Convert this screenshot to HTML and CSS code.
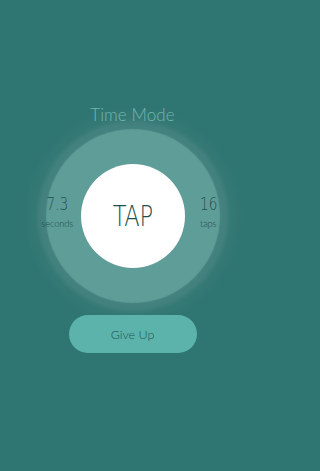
FILE: index.html
```html
<!DOCTYPE html>
<html>
<head>
<meta charset="utf-8">
<link rel="stylesheet" href="styles.css">
</head>
<body>
<main class="screen">
  <h1 class="title">Time Mode</h1>
  <section class="stage">
    <div class="stat stat-left">
      <div class="stat-value">7.3</div>
      <div class="stat-label">seconds</div>
    </div>
    <div class="tap">
      <span class="tap-text">TAP</span>
    </div>
    <div class="stat stat-right">
      <div class="stat-value">16</div>
      <div class="stat-label">taps</div>
    </div>
  </section>
  <button class="give-up">Give Up</button>
</main>
</body>
</html>
```
FILE: styles.css
```css
html, body {
  margin: 0;
  padding: 0;
}
body {
  background: #2f7571;
  font-family: "Lato", "DejaVu Sans", sans-serif;
  width: 265px;
  height: 471px;
  overflow: hidden;
}
.screen {
  display: flex;
  flex-direction: column;
  align-items: center;
  padding-top: 104px;
}
.title {
  margin: 0;
  font-weight: 300;
  font-size: 17px;
  line-height: 22px;
  color: #6db6ae;
  letter-spacing: 0.1px;
}
.stage {
  margin-top: 38px;
  width: 265px;
  display: grid;
  grid-template-columns: 1fr 104px 1fr;
  align-items: center;
}
.tap {
  width: 104px;
  height: 104px;
  border-radius: 50%;
  background: #ffffff;
  display: flex;
  align-items: center;
  justify-content: center;
  box-shadow:
    0 0 1px 35px #5f9d98,
    0 0 4px 43px rgba(255, 255, 255, 0.07),
    0 0 8px 53px rgba(255, 255, 255, 0.035);
}
.tap-text {
  font-family: "DejaVu Sans", sans-serif;
  font-weight: 200;
  font-size: 29px;
  color: #1f4f4c;
  transform: scaleX(0.78);
  letter-spacing: -0.5px;
}
.stat {
  position: relative;
  z-index: 1;
  text-align: center;
  color: #1f4f4c;
}
.stat-left {
  padding-left: 34px;
}
.stat-right {
  padding-right: 33px;
}
.stat-value {
  font-family: "DejaVu Sans", sans-serif;
  font-weight: 200;
  font-size: 17px;
  line-height: 20px;
  transform: scaleX(0.8);
  margin-top: -8px;
}
.stat-label {
  font-size: 9.5px;
  font-weight: 300;
  line-height: 12px;
  margin-top: 4px;
  letter-spacing: -0.2px;
}
.give-up {
  margin-top: 47px;
  width: 128px;
  height: 38px;
  border: none;
  border-radius: 19px;
  background: #5cb3ab;
  color: #1b5552;
  font-family: "Lato", sans-serif;
  font-weight: 300;
  font-size: 12.5px;
  padding: 0;
}
```
